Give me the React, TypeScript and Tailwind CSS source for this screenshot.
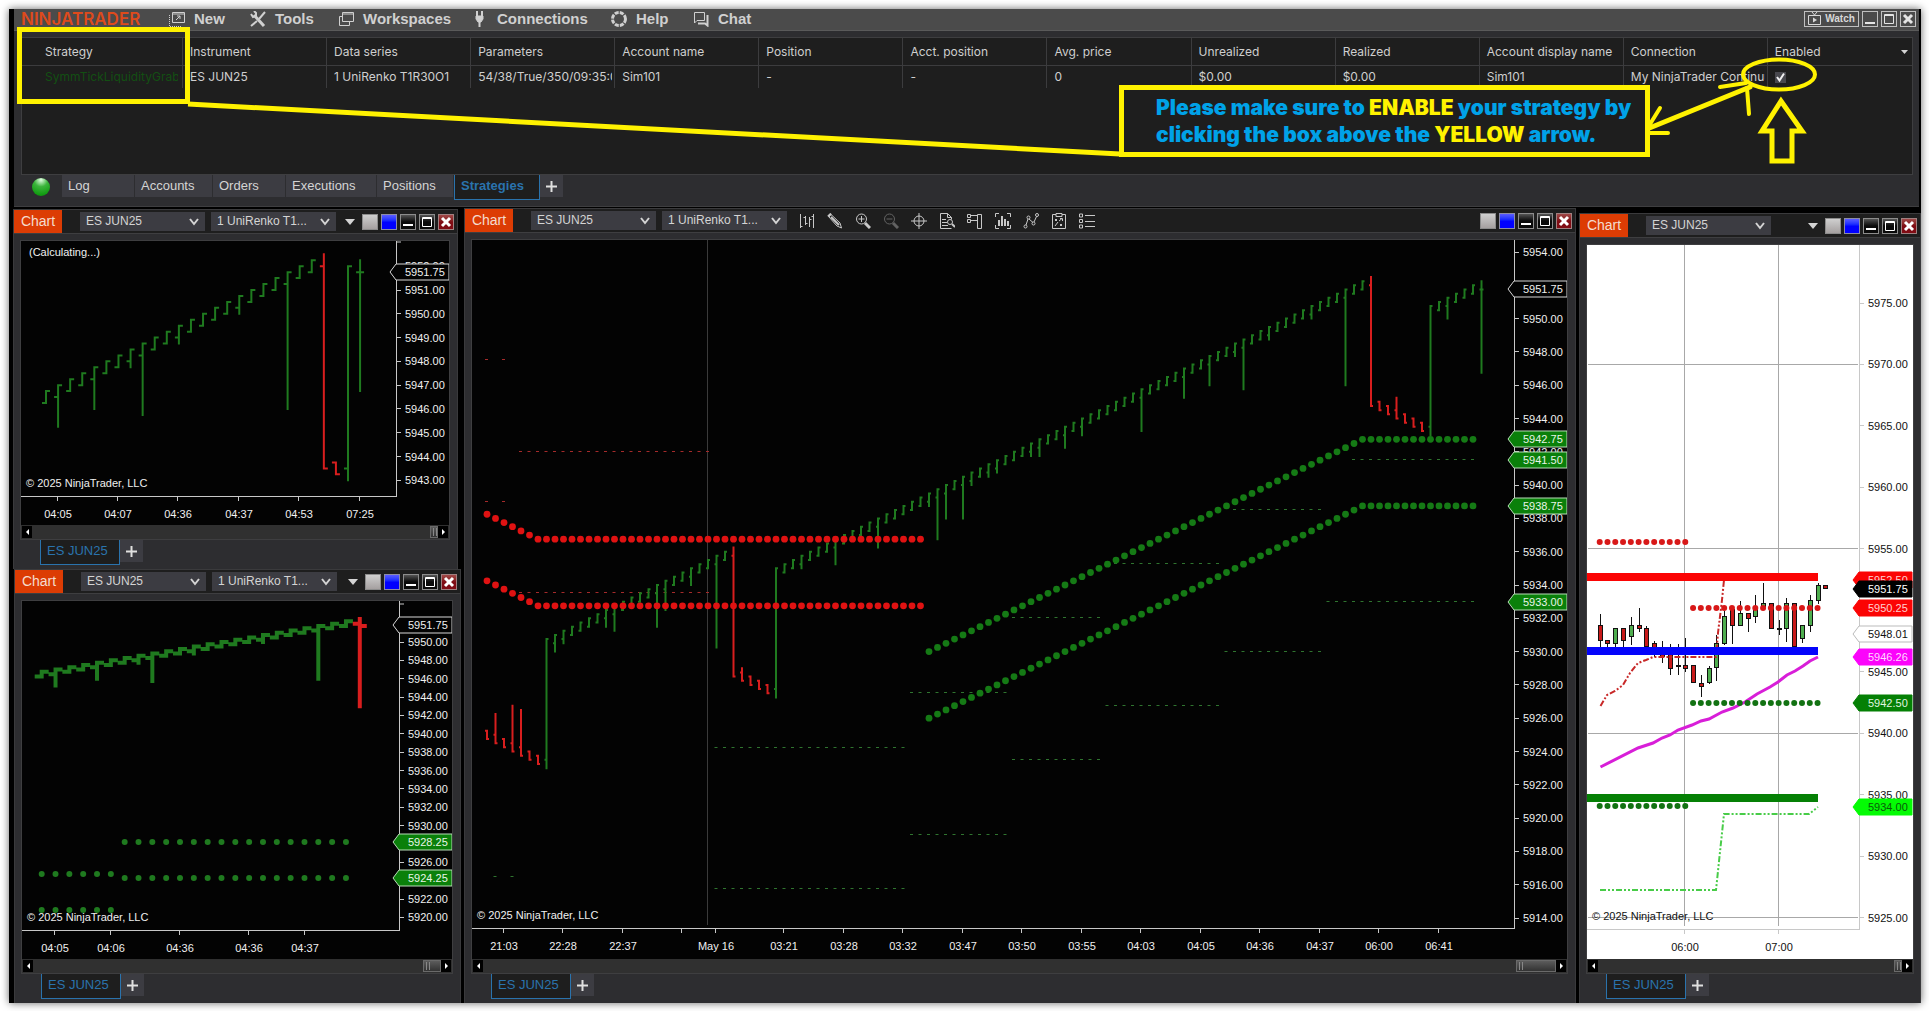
import React from "react";

type Bar = { i: number; open: number; close: number; high?: number; low?: number };
type Scale = { x: (i: number) => number; y: (price: number) => number };

const GREEN = "#1f7a1f";
const RED = "#d81e1e";

// A renko run: every bar closes one step past the previous one
function renkoRun(from: number, to: number, firstClose: number, step: number, lows: Record<number, number> = {}): Bar[] {
  const bars: Bar[] = [];
  for (let i = from; i <= to; i++) {
    const close = firstClose + step * (i - from);
    const bar: Bar = { i, close, open: close - step * 2 };
    if (lows[i] !== undefined) {
      if (step > 0) bar.low = lows[i];
      else bar.high = lows[i];
    }
    bars.push(bar);
  }
  return bars;
}

const range = (from: number, to: number) => Array.from({ length: to - from + 1 }, (_, k) => from + k);

function OhlcBars({ bars, scale, tick, width }: { bars: Bar[]; scale: Scale; tick: number; width: number }) {
  const path = (list: Bar[]) =>
    list
      .map((b) => {
        const x = scale.x(b.i);
        const pad = width / 2;
        const top = scale.y(Math.max(b.open, b.close, b.high ?? 0)) - pad;
        const bottom = scale.y(Math.min(b.open, b.close, b.low ?? 99999)) + pad;
        return `M${x} ${top}V${bottom}M${x - tick} ${scale.y(b.open)}H${x}M${x} ${scale.y(b.close)}H${x + tick}`;
      })
      .join("");
  return (
    <g fill="none" strokeWidth={width}>
      <path stroke={GREEN} d={path(bars.filter((b) => b.close >= b.open))} />
      <path stroke={RED} d={path(bars.filter((b) => b.close < b.open))} />
    </g>
  );
}

function Dots({ points, color, r = 3 }: { points: number[][]; color: string; r?: number }) {
  return (
    <g fill={color}>
      {points.map(([x, y], k) => (
        <circle key={k} cx={x} cy={y} r={r} />
      ))}
    </g>
  );
}

function PriceTag({ x, y, end, price, fill, stroke, text }: { x: number; y: number; end: number; price: string; fill: string; stroke: string; text: string }) {
  return (
    <g>
      <path d={`M${x} ${y}L${x + 6} ${y - 8}H${end}V${y + 8}H${x + 6}Z`} fill={fill} stroke={stroke} />
      <text x={x + 15} y={y + 4} fill={text}>
        {price}
      </text>
    </g>
  );
}

// Shared frame for every chart, ox / oy is the canvas corner in desktop coordinates
function Canvas({ ox, oy, light = false, children }: { ox: number; oy: number; light?: boolean; children: React.ReactNode }) {
  return (
    <svg
      className={`block h-full w-full font-['Liberation_Sans',Arial,sans-serif] text-[11px] ${light ? "bg-white" : "bg-[#030303]"}`}
      fill={light ? "#111" : "#f0f0f0"}
    >
      <g transform={`translate(${-ox} ${-oy})`}>{children}</g>
    </svg>
  );
}

type AxisProps = {
  x: number;
  top: number;
  bottom: number;
  left: number;
  prices: number[];
  times: [number, string][];
  y: (p: number) => number;
  timeY: number;
  color: string;
};

function Axes({ x, top, bottom, left, prices, times, y, timeY, color }: AxisProps) {
  return (
    <>
      <g stroke={color} fill="none" shapeRendering="crispEdges">
        <path d={`M${x} ${top}V${bottom}H${left}`} />
        {prices.map((p) => (
          <path key={p} d={`M${x} ${y(p)}h5`} />
        ))}
        {times.map(([tx]) => (
          <path key={tx} d={`M${tx} ${bottom}v5`} />
        ))}
      </g>
      {prices.map((p) => (
        <text key={p} x={x + 9} y={y(p) + 4}>
          {p.toFixed(2)}
        </text>
      ))}
      {times.map(([tx, label]) => (
        <text key={tx} x={tx + 1} y={timeY + 4} textAnchor="middle">
          {label}
        </text>
      ))}
    </>
  );
}

function ChartTopLeft() {
  const scale: Scale = { x: (i) => 46 + 12.08 * i, y: (p) => 290 + (5951 - p) * 23.79 };
  const bars: Bar[] = [
    ...renkoRun(0, 22, 5946.75, 0.25, { 1: 5945.25, 4: 5946, 7: 5947.75, 8: 5945.75, 11: 5948.75, 16: 5950, 20: 5946 }),
    { i: 23, open: 5952, close: 5943.5, high: 5952.5 },
    { i: 24, open: 5943.75, close: 5943.25 },
    { i: 25, open: 5943.5, close: 5952, low: 5943 },
    { i: 26, open: 5951.75, close: 5951.75, high: 5952.25, low: 5946.75 },
  ];
  return (
    <Canvas ox={21} oy={241}>
      <Axes
        x={396}
        top={241}
        bottom={496}
        left={21}
        prices={[5952, 5951, 5950, 5949, 5948, 5947, 5946, 5945, 5944, 5943]}
        times={[[57, "04:05"], [117, "04:07"], [177, "04:36"], [238, "04:37"], [298, "04:53"], [359, "07:25"]]}
        y={scale.y}
        timeY={514}
        color="#c8c8c8"
      />
      <path d="M396 242h5" stroke="#c8c8c8" />
      <OhlcBars bars={bars} scale={scale} tick={4} width={2} />
      <text x={29} y={256}>(Calculating...)</text>
      <text x={26} y={487}>© 2025 NinjaTrader, LLC</text>
      <PriceTag x={390} y={272} end={449} price="5951.75" fill="#030303" stroke="#d8d8d8" text="#f0f0f0" />
    </Canvas>
  );
}

function ChartBottomLeft() {
  const scale: Scale = { x: (i) => 41.7 + 13.83 * i, y: (p) => 642 + (5950 - p) * 9.18 };
  const bars: Bar[] = [
    ...renkoRun(0, 22, 5946.75, 0.25, { 1: 5945.25, 4: 5946, 7: 5947.75, 8: 5945.75, 11: 5948.75, 16: 5950, 20: 5946 }),
    { i: 23, open: 5952, close: 5951.75, high: 5952.5, low: 5943 },
  ];
  const row = (from: number, to: number, y: number) => range(from, to).map((i) => [scale.x(i), y]);
  return (
    <Canvas ox={22} oy={601}>
      <Axes
        x={399}
        top={601}
        bottom={930}
        left={22}
        prices={[5950, 5948, 5946, 5944, 5942, 5940, 5938, 5936, 5934, 5932, 5930, 5926, 5922, 5920]}
        times={[[54, "04:05"], [110, "04:06"], [179, "04:36"], [248, "04:36"], [304, "04:37"]]}
        y={scale.y}
        timeY={948}
        color="#c8c8c8"
      />
      <path d="M399 604h5" stroke="#c8c8c8" />
      <OhlcBars bars={bars} scale={scale} tick={7} width={4} />
      <Dots color={GREEN} points={[...row(6, 22, 842), ...row(6, 22, 878), ...row(0, 5, 874), ...row(0, 5, 910)]} />
      <text x={27} y={921}>© 2025 NinjaTrader, LLC</text>
      <PriceTag x={393} y={625} end={452} price="5951.75" fill="#030303" stroke="#d8d8d8" text="#f0f0f0" />
      <PriceTag x={393} y={842} end={452} price="5928.25" fill="#0a800a" stroke="#b8dcb8" text="#e8f5e8" />
      <PriceTag x={393} y={878} end={452} price="5924.25" fill="#0a800a" stroke="#b8dcb8" text="#e8f5e8" />
    </Canvas>
  );
}

const MAIN_TIMES: [number, string][] = [
  [503, "21:03"], [562, "22:28"], [622, "22:37"], [681, ""], [715, "May 16"], [783, "03:21"], [843, "03:28"], [902, "03:32"],
  [962, "03:47"], [1021, "03:50"], [1081, "03:55"], [1140, "04:03"], [1200, "04:05"], [1259, "04:36"], [1319, "04:37"], [1378, "06:00"], [1438, "06:41"],
];

function ChartMain() {
  const scale: Scale = { x: (i) => 487 + 8.5 * i, y: (p) => 252 + (5954 - p) * 16.65 };
  const bars: Bar[] = [
    ...renkoRun(0, 6, 5924.75, -0.25, { 1: 5926.25, 3: 5926.75, 4: 5926.5 }),
    ...renkoRun(8, 28, 5931, 0.25, { 8: 5930, 9: 5930.5, 14: 5931.5, 15: 5931.25, 20: 5931.5, 21: 5932.5, 24: 5934, 27: 5930.25 }),
    { i: 7, open: 5923.5, close: 5930.75, low: 5923 },
    { i: 29, open: 5935.75, close: 5928.5, high: 5936.25 },
    ...renkoRun(30, 33, 5928.25, -0.25, { 30: 5929 }),
    { i: 34, open: 5927.75, close: 5935, low: 5927.25 },
    ...renkoRun(35, 103, 5935.25, 0.25, {
      37: 5935, 41: 5935.25, 46: 5936.25, 52: 5938.75, 53: 5936.75, 54: 5938, 56: 5938, 57: 5940, 59: 5940.5, 60: 5940.75,
      64: 5941.75, 65: 5941.75, 68: 5942.25, 70: 5943, 77: 5943.25, 82: 5945.25, 85: 5946, 88: 5947.75, 89: 5945.75,
      92: 5948.75, 97: 5950, 101: 5946,
    }),
    { i: 104, open: 5952, close: 5944.75, high: 5952.5 },
    ...renkoRun(105, 110, 5944.5, -0.25, { 107: 5945.25 }),
    { i: 111, open: 5943.5, close: 5950.75, low: 5943 },
    ...renkoRun(112, 116, 5951, 0.25, { 113: 5950 }),
    { i: 117, open: 5951.75, close: 5951.75, high: 5952.25, low: 5946.75 },
  ];
  const band = (from: number, to: number, price: (i: number) => number) => range(from, to).map((i) => [scale.x(i), scale.y(price(i))]);
  const dashes = (list: number[][]) =>
    list.map(([from, to, y, step = 1]) => range(from, to).filter((i) => (i - from) % step === 0).map((i) => `M${scale.x(i) - 2} ${y}h3`).join("")).join("");
  return (
    <Canvas ox={472} oy={240}>
      <path d="M707.5 240V925" stroke="#3a3a3a" />
      <Axes
        x={1514}
        top={240}
        bottom={928}
        left={472}
        prices={range(0, 20).map((k) => 5954 - 2 * k).filter((p) => p !== 5952)}
        times={MAIN_TIMES}
        y={scale.y}
        timeY={946}
        color="#c8c8c8"
      />
      <path
        stroke="#a52a2a"
        d={dashes([[0, 2, 359.5, 2], [0, 2, 501.5, 2], [4, 26, 451.5], [4, 26, 592.5]])}
      />
      <path
        stroke="#2f742f"
        d={dashes([
          [1, 3, 876.5, 2], [27, 49, 747.5], [27, 49, 888.5], [50, 61, 692.5], [50, 61, 834.5], [62, 72, 617.5], [62, 72, 759.5],
          [74, 86, 563.5], [73, 86, 705.5], [88, 98, 509.5], [87, 98, 651.5], [102, 116, 459.5], [99, 116, 601.5],
        ])}
      />
      <OhlcBars bars={bars} scale={scale} tick={2} width={2} />
      <Dots r={3.4} color="#e01212" points={band(0, 51, (i) => 5936.75 + Math.max(0, 6 - i) * 0.25)} />
      <Dots r={3.4} color="#e01212" points={band(0, 51, (i) => 5932.75 + Math.max(0, 6 - i) * 0.25)} />
      <Dots r={3.4} color="#157a15" points={band(52, 116, (i) => Math.min(5942.75, 5930 + (i - 52) * 0.25))} />
      <Dots r={3.4} color="#157a15" points={band(52, 116, (i) => Math.min(5938.75, 5926 + (i - 52) * 0.25))} />
      <text x={477} y={919}>© 2025 NinjaTrader, LLC</text>
      <PriceTag x={1508} y={289} end={1567} price="5951.75" fill="#030303" stroke="#d8d8d8" text="#f0f0f0" />
      {[[439, "5942.75"], [460, "5941.50"], [506, "5938.75"], [602, "5933.00"]].map(([y, price]) => (
        <PriceTag key={price} x={1508} y={Number(y)} end={1567} price={String(price)} fill="#0a800a" stroke="#b8dcb8" text="#e8f5e8" />
      ))}
    </Canvas>
  );
}

// bar index, wick top, body top, body bottom, wick bottom, up
const CANDLES: [number, number, number, number, number, boolean][] = [
  [0, 614, 625, 641, 647, false], [1, 640, 640, 644, 647, false], [2, 628, 628, 644, 647, true], [3, 628, 628, 641, 647, false],
  [4, 617, 625, 637, 645, true], [5, 608, 625, 629, 632, false], [6, 626, 628, 647, 647, false], [7, 641, 643, 648, 657, false],
  [8, 641, 648, 657, 663, false], [9, 644, 653, 669, 675, false], [10, 644, 665, 666, 675, false], [11, 638, 665, 669, 672, false],
  [12, 665, 665, 683, 683, false], [13, 675, 683, 687, 697, false], [14, 666, 668, 683, 684, true], [15, 635, 643, 668, 681, true],
  [16, 611, 616, 644, 645, true], [17, 608, 609, 626, 644, false], [18, 601, 613, 626, 626, true], [19, 613, 613, 619, 632, false],
  [20, 595, 607, 617, 623, true], [21, 583, 603, 607, 607, true], [22, 603, 603, 629, 629, false], [23, 620, 628, 629, 635, false],
  [24, 598, 603, 629, 642, true], [25, 603, 603, 647, 647, false], [26, 625, 625, 639, 643, true], [27, 595, 600, 626, 632, true],
  [28, 583, 585, 601, 604, true], [29, 585, 585, 589, 589, false],
];

const WHITE_TAGS: [number, string, string, string, string][] = [
  [580, "5952.50", "#fb0404", "#fb0404", "#ffd0d0"],
  [589, "5951.75", "#000", "#000", "#fff"],
  [608, "5950.25", "#fb0404", "#fb0404", "#ffd0d0"],
  [634, "5948.01", "#fff", "#bbb", "#111"],
  [657, "5946.26", "#fb04fb", "#fb04fb", "#ffd8ff"],
  [703, "5942.50", "#058005", "#058005", "#e0f5e0"],
  [807, "5934.00", "#04fb04", "#04fb04", "#0a5a0a"],
];

function ChartRight() {
  const x = (i: number) => 1599.7 + 7.78 * i;
  const y = (p: number) => 303 + (5975 - p) * 12.29;
  const row = (from: number, to: number, yy: number) => range(from, to).map((i) => [x(i), yy]);
  return (
    <Canvas ox={1587} oy={245} light>
      <path
        d="M1588 364.5H1858M1588 548.5H1858M1588 733.5H1858M1588 917.5H1858M1684.5 245V926M1778.5 245V926"
        stroke="#a8a8a8"
      />
      <Axes
        x={1859}
        top={245}
        bottom={929}
        left={1587}
        prices={[5975, 5970, 5965, 5960, 5955, 5945, 5940, 5935, 5930, 5925]}
        times={[[1684, "06:00"], [1778, "07:00"]]}
        y={y}
        timeY={947}
        color="#c8c8c8"
      />
      <g shapeRendering="crispEdges">
        {CANDLES.map(([i, high, top, bottom, low, up]) => {
          const cx = Math.round(x(i));
          return (
            <g key={i} stroke="#111">
              <path d={`M${cx}.5 ${high}V${low}`} />
              <rect x={cx - 1.5} y={top + 0.5} width={4} height={Math.max(1, bottom - top - 1)} fill={up ? "#4fae4f" : "#c81a1a"} />
            </g>
          );
        })}
      </g>
      <g fill="none" strokeWidth={2}>
        <path
          stroke="#c82828"
          strokeDasharray="6 2 2 2 2 2"
          d="M1600.5 706L1607 695L1615 691L1623 685L1630 673L1638 663L1646 660L1653 657H1716L1718 633L1722 600L1724 580"
        />
        <path stroke="#48cc48" strokeDasharray="6 2 2 2 2 2" d="M1600 890H1716L1724 814H1809L1818 807" />
      </g>
      <path
        stroke="#d81ed8"
        strokeWidth={3}
        fill="none"
        d="M1600.5 767L1638 748L1653 743L1662 738L1670 735L1678 730L1692 725L1701 721L1709 719L1722 712L1733 708L1745 702L1757 694L1770 687L1778 682L1787 675L1795 671L1803 666L1810 661L1818 657"
      />
      <Dots color="#d81818" points={[...row(0, 11, 542), ...row(12, 28, 608)]} />
      <Dots color="#127212" points={[...row(12, 28, 703), ...row(0, 11, 806)]} />
      <path d="M1587 577H1818" stroke="#fb0404" strokeWidth={8} />
      <path d="M1587 651H1818" stroke="#0404fb" strokeWidth={8} />
      <path d="M1587 798H1818" stroke="#058005" strokeWidth={8} />
      <text x={1592} y={920}>© 2025 NinjaTrader, LLC</text>
      {WHITE_TAGS.map(([ty, price, fill, stroke, text]) => (
        <PriceTag key={price} x={1853} y={ty} end={1912} price={price} fill={fill} stroke={stroke} text={text} />
      ))}
    </Canvas>
  );
}

function Combo({ label, value }: { label: string; value: string }) {
  return (
    <div className="relative h-[19px] w-[125px] shrink-0">
      <select
        aria-label={label}
        className="block h-full w-full appearance-none bg-[#3c3c42] pb-0.5 pl-1.5 text-[12px] leading-[14px] text-[#d4d4d4] outline-none"
      >
        <option>{value}</option>
      </select>
      <svg className="pointer-events-none absolute right-1.5 top-1.5" width="10" height="8" fill="none" stroke="#d4d4d4" strokeWidth="2">
        <path d="M1 1L5 6L9 1" />
      </svg>
    </div>
  );
}

function WindowButtons() {
  const base = "flex h-4 w-4 items-center justify-center border";
  return (
    <div className="flex shrink-0 gap-[3px]">
      <button aria-label="Link instrument" className={`${base} border-[#8c8c8c] bg-linear-to-b from-[#cfcfcf] to-[#a5a0a0]`} />
      <button aria-label="Link interval" className={`${base} border-[#8c8ca8] bg-linear-to-b from-[#5a5aff] to-[#0000ff] to-50%`} />
      <button aria-label="Minimize" className={`${base} border-[#8c8c8c] bg-linear-to-b from-[#555] to-[#0a0a0a] to-50%`}>
        <svg width="14" height="14"><path d="M2 10h10" stroke="#fff" strokeWidth="2" /></svg>
      </button>
      <button aria-label="Maximize" className={`${base} border-[#8c8c8c] bg-linear-to-b from-[#555] to-[#0a0a0a] to-50%`}>
        <svg width="14" height="14" fill="none" stroke="#fff">
          <path d="M2.5 2.5h9v9h-9zM2 3.5h10" />
        </svg>
      </button>
      <button aria-label="Close" className={`${base} border-[#a08080] bg-linear-to-b from-[#a04848] to-[#800c14] to-50%`}>
        <svg width="14" height="14"><path d="M3 3L11 11M11 3L3 11" stroke="#fff" strokeWidth="3" /></svg>
      </button>
    </div>
  );
}

const TOOL_ICONS: { name: string; muted?: boolean; art: React.ReactNode }[] = [
  { name: "Bar style", art: <path d="M1.5 1v14M6.5 3v9M10.5 4v10M14.5 1v14M1.5 13.5h2M6.5 10.5h2M10.5 6.5h2M4.5 4.5h2M12.5 3.5h2" /> },
  { name: "Drawing tools", art: <><path d="M2 4L4 1.5L13 10L14.5 15L10 13Z" /><path d="M4 4L12 12M1 3.5l3-3" strokeWidth="2" /></> },
  { name: "Zoom in", art: <><circle cx="6.5" cy="6" r="5" /><path d="M6.5 3v6M3.5 6h6" /><path d="M10 10l5 5" strokeWidth="3" /></> },
  { name: "Zoom out", muted: true, art: <><circle cx="6.5" cy="6" r="5" /><path d="M3.5 6h6" /><path d="M10 10l5 5" strokeWidth="3" /></> },
  { name: "Crosshair", art: <><circle cx="8" cy="8" r="5" /><path d="M8 0v16M0 8h16" /></> },
  { name: "Data box", art: <><path d="M12.5 15.5h-11V.5h7l4 4v2M8.5.5v4h4M3 6.5h4M3 9.5h5M3 12.5h6" /><circle cx="11" cy="9" r="2.5" /><path d="M13 11l3 3" strokeWidth="2" /></> },
  { name: "Chart trader", art: <path d="M10.5 1.5h4v14h-4zM.5 1.5h3v3h-3zM.5 6.5h3v3h-3zM4 2.5h6M4 7.5h6" /> },
  { name: "Bars window", art: <><path d="M4 .5H.5V4M12 .5h3.5V4M4 15.5H.5V12M12 15.5h3.5V12" /><path d="M4 13V7M7 13V3M10 13V6M13 13V8" strokeWidth="2" /></> },
  { name: "Indicators", art: <><circle cx="2.5" cy="13.5" r="1.5" /><circle cx="5.5" cy="4.5" r="1.5" /><circle cx="10.5" cy="10.5" r="1.5" /><circle cx="14" cy="2" r="1.5" /><path d="M3 12L5 6M6 6l4 3.5M11 9l2.5-5.5" /></> },
  { name: "Strategies", art: <path d="M5 1.5H1.5v14h13v-14H11M5 .5h6v3H5zM4 6l2 2M6 6L4 8M9 11l2 2M11 11l-2 2M4 13l3-4M8 8l3-2.5M9 5.5h2.5V8" /> },
  { name: "Properties", art: <path d="M.5 1h3v3h-3zM.5 6.5h3v3h-3zM.5 12h3v3h-3zM6 2.5h10M6 8.5h10M6 13.5h10" /> },
];

function ToolIcons() {
  return (
    <div className="ml-3 flex shrink-0 gap-3">
      {TOOL_ICONS.map((icon) => (
        <button key={icon.name} aria-label={icon.name} className="h-4 w-4">
          <svg width="16" height="16" fill="none" stroke={icon.muted ? "#626262" : "#c8c8c8"}>
            {icon.art}
          </svg>
        </button>
      ))}
    </div>
  );
}

function ScrollBar({ thumb }: { thumb: string }) {
  return (
    <div className="flex h-[14px] items-stretch bg-[#303030] p-px">
      <button aria-label="Scroll left" className="w-[10px] bg-black">
        <svg width="10" height="12"><path d="M7 3v6L4 6z" fill="#fff" /></svg>
      </button>
      <div className="flex-1" />
      <div className={`${thumb} flex items-center gap-0.5 border border-[#6a6a6a] bg-linear-to-b from-[#5c5c5c] to-[#333] pl-0.5`}>
        <span className="h-2 w-px bg-[#888]" />
        <span className="h-2 w-px bg-[#888]" />
      </div>
      <button aria-label="Scroll right" className="w-[10px] bg-black">
        <svg width="10" height="12"><path d="M4 3v6l3-3z" fill="#fff" /></svg>
      </button>
    </div>
  );
}

type ChartWindowProps = {
  className: string;
  bodyClass: string;
  interval?: boolean;
  tools?: boolean;
  thumb: string;
  children: React.ReactNode;
};

function ChartWindow({ className, bodyClass, interval = false, tools = false, thumb, children }: ChartWindowProps) {
  return (
    <section className={`flex flex-col border border-b-0 border-[#3a3a3c] bg-[#2d2d30] ${className}`}>
      <header className="flex h-6 shrink-0 items-center border-b border-[#3e3e40] bg-[#1e1e1e] pr-[3px]">
        <h2 className="flex h-[23px] w-12 shrink-0 items-center justify-center bg-[#dc3c04] text-[14px] text-[#f4dcd0]">Chart</h2>
        <div className="ml-[18px] flex gap-[6px]">
          <Combo label="Instrument" value="ES JUN25" />
          {interval && <Combo label="Interval" value="1 UniRenko T1..." />}
        </div>
        {tools && <ToolIcons />}
        <div className="flex-1" />
        {!tools && (
          <button aria-label="More tools" className="mr-[7px]">
            <svg width="10" height="6" className="block"><path d="M0 0h10L5 6z" fill="#d4d4d4" /></svg>
          </button>
        )}
        <WindowButtons />
      </header>
      <div className={`flex flex-1 flex-col pt-1.5 ${bodyClass}`}>
        <div className="flex flex-1 flex-col border border-[#3e3e40]">
          <div className="relative min-h-[284px] flex-1">
            <div className="absolute inset-0">{children}</div>
          </div>
          <ScrollBar thumb={thumb} />
        </div>
        <div className="ml-5 flex h-[29px] shrink-0 items-start">
          <button className="h-[25px] w-20 border border-t-0 border-[#2a73ad] bg-[#1e1e1e] pb-0.5 pl-1.5 text-left text-[13px] text-[#2a73ad]">
            ES JUN25
          </button>
          <PlusTab />
        </div>
      </div>
    </section>
  );
}

function PlusTab() {
  return (
    <button aria-label="Add tab" className="flex h-[22px] w-[23px] items-center justify-center bg-[#3c3c42]">
      <svg width="11" height="11"><path d="M5.5 0v11M0 5.5h11" stroke="#e0e0e0" strokeWidth="2" /></svg>
    </button>
  );
}

const MENU: { label: string; width: string; icon: React.ReactNode }[] = [
  { label: "New", width: "w-[81px]", icon: <><path d="M3.5 11.5V1.5h12v10zM3 3h13" /><path d="M7 9l4-4M8 5h3v3" /><path d="M.5 4v11.5H12" strokeDasharray="1 1" /></> },
  { label: "Tools", width: "w-[88px]", icon: <><path d="M4 4l10 11" strokeWidth="3" /><path d="M1 3l2 3 3-1 0-3-2-2" strokeWidth="2" /><path d="M15 1L9 8M7 10l-6 5" strokeWidth="2" /></> },
  { label: "Workspaces", width: "w-[134px]", icon: <><path d="M4.5 1.5h11v9h-11zM4 3h12" /><path d="M4 5.5H1.5v9h10V11" /></> },
  { label: "Connections", width: "w-[139px]", icon: <><path d="M4 5h7v3L9 11h-3L4 8z" fill="#d0d0d0" /><path d="M5 0v5M10 0v5M7.5 10v6" strokeWidth="2" /></> },
  { label: "Help", width: "w-[82px]", icon: <circle cx="8" cy="8" r="6.5" strokeWidth="3" strokeDasharray="4 1.1" /> },
  { label: "Chat", width: "w-[70px]", icon: <><path d="M1.5 12V1.5h10v8H4z" /><path d="M14.5 4v10.5L12 12.5H5" strokeWidth="2" /></> },
];

function MenuBar() {
  const box = "flex h-4 items-center justify-center border border-[#c0c0c0] text-[#d8d8d8]";
  return (
    <header className="flex h-[22px] items-center border-b border-[#5a5a5a] bg-[#4b4b4b] pr-[3px] pb-0.5 pl-[7px]">
      <h1 className="w-[148px] shrink-0 font-[Inter,sans-serif] text-[17px] leading-5 font-semibold text-[#de4a1c]">NINJATRADER</h1>
      <nav className="flex">
        {MENU.map((item) => (
          <button key={item.label} className={`flex items-center gap-[9px] text-left text-[15px] leading-[19px] font-bold text-[#d0d0d0] ${item.width}`}>
            <svg width="16" height="16" className="shrink-0" fill="none" stroke="#d0d0d0">
              {item.icon}
            </svg>
            {item.label}
          </button>
        ))}
      </nav>
      <div className="flex-1" />
      <div className="flex gap-[3px]">
        <button className={`${box} w-[55px] gap-1 text-[10px] font-bold`}>
          <svg width="13" height="13" fill="none" stroke="#d8d8d8">
            <path d="M.5 3.5h12v9H.5zM4 0l2.5 3L9 0" />
            <path d="M5 5.5v5L9 8z" fill="#d8d8d8" stroke="none" />
          </svg>
          Watch
        </button>
        <button aria-label="Minimize" className={`${box} w-4`}>
          <svg width="14" height="14"><path d="M2 11h10" stroke="#e4e4e4" strokeWidth="2" /></svg>
        </button>
        <button aria-label="Maximize" className={`${box} w-4`}>
          <svg width="14" height="14" fill="none" stroke="#e4e4e4"><path d="M2.5 2.5h9v9h-9zM2 3.5h10" /></svg>
        </button>
        <button aria-label="Close" className={`${box} w-4`}>
          <svg width="14" height="14"><path d="M3 3l8 8M11 3l-8 8" stroke="#e4e4e4" strokeWidth="3" /></svg>
        </button>
      </div>
    </header>
  );
}

const COLUMNS: [string, string][] = [
  ["Instrument", "ES JUN25"],
  ["Data series", "1 UniRenko T1R30O1"],
  ["Parameters", "54/38/True/350/09:35:00"],
  ["Account name", "Sim101"],
  ["Position", "-"],
  ["Acct. position", "-"],
  ["Avg. price", "0"],
  ["Unrealized", "$0.00"],
  ["Realized", "$0.00"],
  ["Account display name", "Sim101"],
  ["Connection", "My NinjaTrader Continuum"],
];

function StrategyGrid() {
  const cell = "overflow-hidden border-r border-[#3c3c3e] pl-[7px] text-left font-normal whitespace-nowrap";
  return (
    <div className="mr-[6px] ml-[7px] h-[138px] border border-[#3e3e40] bg-[#1e1e1e]">
      <table className="w-full table-fixed border-separate border-spacing-0 font-[Inter,sans-serif] text-[12px] text-[#cfcfcf]">
        <thead>
          <tr className="h-7">
            <th className={`${cell} w-[161px] border-b pl-[23px]`}>Strategy</th>
            {COLUMNS.map(([name]) => (
              <th key={name} className={`${cell} border-b`}>{name}</th>
            ))}
            <th className="border-b border-[#3c3c3e] pr-1 pl-[7px] font-normal">
              <div className="flex items-center justify-between">
                Enabled
                <svg width="7" height="4"><path d="M0 0h7L3.5 4z" fill="#d4d4d4" /></svg>
              </div>
            </th>
          </tr>
        </thead>
        <tbody>
          <tr className="h-[22px]">
            <td className={`${cell} pr-1 pl-[23px] text-[#134f13]`}>
              <div className="overflow-hidden">SymmTickLiquidityGrab</div>
            </td>
            {COLUMNS.map(([name, value]) => (
              <td key={name} className={`${cell} pr-0.5`}>
                <div className="overflow-hidden">{value}</div>
              </td>
            ))}
            <td className="pl-[7px]">
              <label className="relative block h-[11px] w-[11px]">
                <input type="checkbox" aria-label="Enabled" defaultChecked className="block h-full w-full appearance-none bg-[#48484e]" />
                <svg className="pointer-events-none absolute inset-0" width="11" height="11" fill="none" stroke="#f0f0f0" strokeWidth="2">
                  <path d="M2 5L4.5 8.5L9 1.5" />
                </svg>
              </label>
            </td>
          </tr>
        </tbody>
      </table>
    </div>
  );
}

function ControlTabs() {
  const tab = "mr-px h-[22px] bg-[#3c3c42] pl-1.5 text-left text-[13px] text-[#d4d4d4]";
  return (
    <div className="flex h-[31px] items-start pl-[18px]">
      <svg width="18" height="22" className="mr-3 shrink-0">
        <defs>
          <radialGradient id="orb" cx="50%" cy="10%" r="85%">
            <stop offset="0" stopColor="#e4ffe4" />
            <stop offset="0.45" stopColor="#3cb53c" />
            <stop offset="1" stopColor="#0f9a0f" />
          </radialGradient>
        </defs>
        <ellipse cx="9" cy="12" rx="9" ry="9" fill="url(#orb)" />
      </svg>
      <button className={`${tab} w-[72px]`}>Log</button>
      <button className={`${tab} w-[77px]`}>Accounts</button>
      <button className={`${tab} w-[72px]`}>Orders</button>
      <button className={`${tab} w-[90px]`}>Executions</button>
      <button className={`${tab} w-[76px]`}>Positions</button>
      <button className="h-[25px] w-[86px] border border-t-0 border-[#2a73ad] bg-[#1e1e1e] pb-0.5 pl-1.5 text-left text-[13px] font-bold text-[#2a73ad]">
        Strategies
      </button>
      <PlusTab />
    </div>
  );
}

function Annotations() {
  return (
    <div className="pointer-events-none absolute inset-0">
      <svg className="absolute inset-0" width="100%" height="210" fill="none" stroke="#fff200" strokeWidth="5">
        <path d="M19.5 29.5h168v72h-168z" />
        <path d="M188 104L1120 154" />
        <g strokeWidth="4" strokeLinecap="round">
          <path d="M1647 129L1750 87" strokeWidth="5" />
          <path d="M1647 129L1660 108M1649 133H1668M1720 87L1746 83M1747 88L1749 114" />
          <path d="M1781 101L1762 131H1772V161H1792V131H1802Z" strokeWidth="5" />
        </g>
        <ellipse cx="1779" cy="74.5" rx="36" ry="15" strokeWidth="4" />
      </svg>
      <p className="absolute top-[85px] left-[1119px] w-[531px] border-[5px] border-[#fff200] bg-[#1e1e1e] py-1 pl-8 font-[Inter,sans-serif] text-[21px] leading-[27px] font-black whitespace-nowrap text-[#00a2e8]">
        Please make sure to <span className="text-[#fff200]">ENABLE</span> your strategy by
        <br />
        clicking the box above the <span className="text-[#fff200]">YELLOW</span> arrow.
      </p>
    </div>
  );
}

export default function App() {
  return (
    <div className="relative flex min-h-screen flex-col bg-white pt-[9px] pr-2 pb-2 pl-[9px] font-['Liberation_Sans',Arial,sans-serif]">
      <main className="flex flex-1 flex-col bg-black pl-1 shadow-[0_0_8px_rgba(0,0,0,0.6)]">
        <section className="mr-0.5 ml-px border-b border-[#3e3e40] bg-[#2d2d30]">
          <MenuBar />
          <div className="h-1.5" />
          <StrategyGrid />
          <ControlTabs />
        </section>

        <div className="flex flex-1 gap-[3px]">
          <div className="flex w-[448px] shrink-0 flex-col pt-0.5">
            <ChartWindow className="mr-[3px]" bodyClass="pr-[7px] pl-1.5" interval thumb="w-2">
              <ChartTopLeft />
            </ChartWindow>
            <ChartWindow className="ml-px flex-1" bodyClass="pr-[7px] pl-1.5" interval thumb="w-[18px]">
              <ChartBottomLeft />
            </ChartWindow>
          </div>
          <div className="flex min-w-0 flex-1 flex-col pt-px">
            <ChartWindow className="flex-1" bodyClass="pr-[7px] pl-1.5" interval tools thumb="w-10">
              <ChartMain />
            </ChartWindow>
          </div>
          <div className="flex w-[342px] shrink-0 flex-col pt-1.5">
            <ChartWindow className="flex-1" bodyClass="px-1.5" thumb="w-2">
              <ChartRight />
            </ChartWindow>
          </div>
        </div>
      </main>
      <Annotations />
    </div>
  );
}
